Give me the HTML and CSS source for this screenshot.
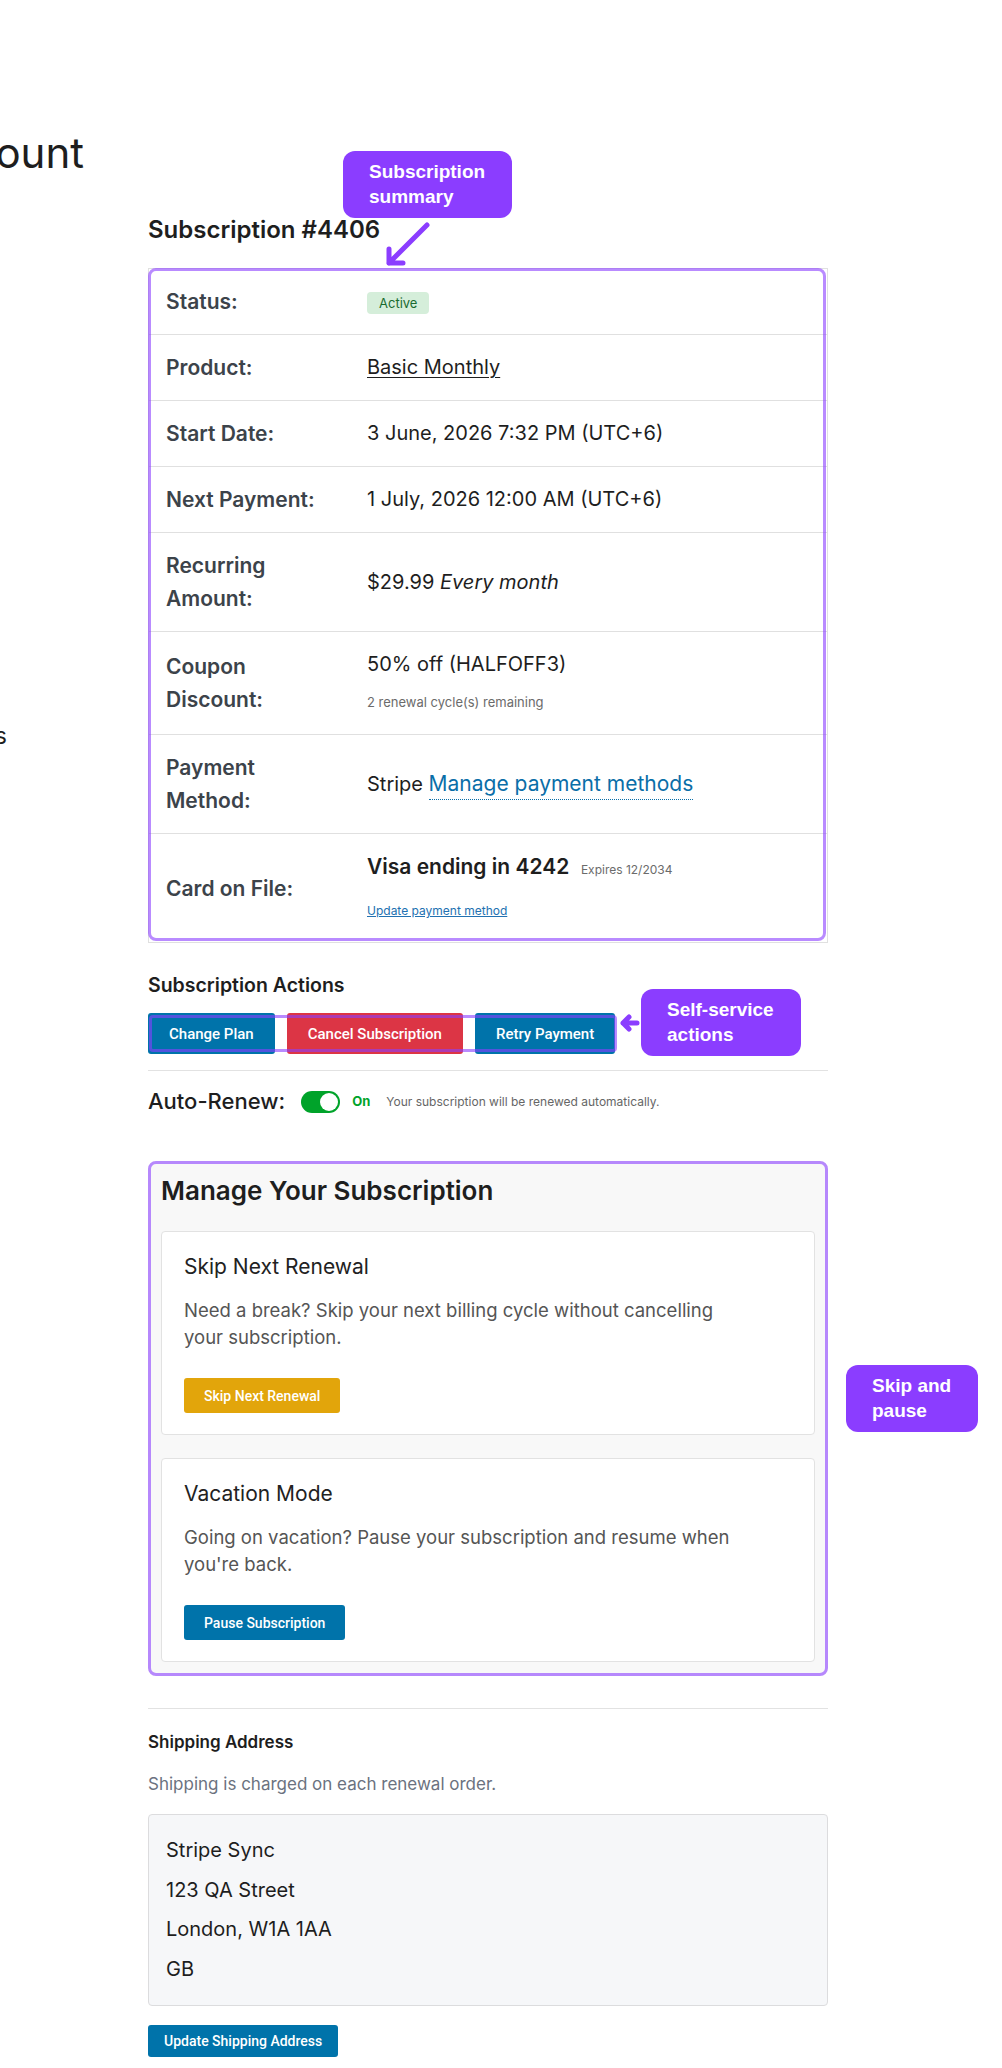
FILE: index.html
```html
<!DOCTYPE html>
<html lang="en">

<head>
	<meta charset="UTF-8">
	<meta name="viewport" content="width=device-width, initial-scale=1.0">
	<title>My Account - Subscription #4406</title>
	<link rel="stylesheet" href="styles.css">
</head>

<body>
	<div class="page">
		<h1 class="account-title"><span>My Account</span></h1>

		<div class="account-layout">
			<nav class="account-nav">
				<ul>
					<li><a href="#">Subscriptions</a></li>
				</ul>
			</nav>

			<main class="account-content">
				<h2 class="subscription-title">Subscription #4406</h2>

				<div class="summary">
					<table class="summary-table">
						<tr>
							<th>Status:</th>
							<td><span class="badge badge-active">Active</span></td>
						</tr>
						<tr>
							<th>Product:</th>
							<td><a class="product-link" href="#">Basic Monthly</a></td>
						</tr>
						<tr>
							<th>Start Date:</th>
							<td>3 June, 2026 7:32 PM (UTC+6)</td>
						</tr>
						<tr>
							<th>Next Payment:</th>
							<td>1 July, 2026 12:00 AM (UTC+6)</td>
						</tr>
						<tr>
							<th>Recurring Amount:</th>
							<td>$29.99 <em>Every month</em></td>
						</tr>
						<tr>
							<th>Coupon Discount:</th>
							<td>
								50% off (HALFOFF3)
								<small class="cell-note">2 renewal cycle(s) remaining</small>
							</td>
						</tr>
						<tr>
							<th>Payment Method:</th>
							<td>Stripe <a class="dotted-link" href="#">Manage payment methods</a></td>
						</tr>
						<tr>
							<th>Card on File:</th>
							<td>
								<strong class="card-name">Visa ending in 4242</strong>
								<span class="card-expiry">Expires 12/2034</span>
								<a class="small-link" href="#">Update payment method</a>
							</td>
						</tr>
					</table>
					<div class="highlight"></div>
				</div>

				<h3 class="section-title">Subscription Actions</h3>
				<div class="actions">
					<button class="btn btn-primary">Change Plan</button>
					<button class="btn btn-danger">Cancel Subscription</button>
					<button class="btn btn-primary">Retry Payment</button>
					<div class="highlight"></div>
				</div>

				<hr class="divider">

				<div class="auto-renew">
					<span class="auto-renew-label">Auto-Renew:</span>
					<span class="toggle"></span>
					<span class="toggle-state">On</span>
					<span class="toggle-hint">Your subscription will be renewed automatically.</span>
				</div>

				<section class="manage">
					<h2 class="manage-title">Manage Your Subscription</h2>

					<div class="option-card">
						<h3>Skip Next Renewal</h3>
						<p>Need a break? Skip your next billing cycle without cancelling your subscription.</p>
						<button class="btn btn-sm btn-warning">Skip Next Renewal</button>
					</div>

					<div class="option-card">
						<h3>Vacation Mode</h3>
						<p>Going on vacation? Pause your subscription and resume when you're back.</p>
						<button class="btn btn-sm btn-primary">Pause Subscription</button>
					</div>

					<div class="highlight"></div>
				</section>

				<hr class="divider divider-shipping">

				<section class="shipping">
					<h4>Shipping Address</h4>
					<p class="shipping-note">Shipping is charged on each renewal order.</p>
					<address class="address-box">
						Stripe Sync<br>
						123 QA Street<br>
						London, W1A 1AA<br>
						GB
					</address>
					<button class="btn btn-xs btn-primary">Update Shipping Address</button>
				</section>
			</main>
		</div>

		<!-- annotation callouts -->
		<div class="note note-summary">Subscription<br>summary</div>
		<svg class="note-arrow arrow-summary" width="50" height="50" viewBox="0 0 50 50">
			<path d="M44 4 L6 42 M6 42 L6 28 M6 42 L20 42" />
		</svg>

		<div class="note note-actions">Self-service<br>actions</div>
		<svg class="note-arrow arrow-actions" width="24" height="24" viewBox="0 0 24 24">
			<path d="M19 12 L5 12 M5 12 L11 6 M5 12 L11 18" />
		</svg>

		<div class="note note-skip">Skip and<br>pause</div>
	</div>
</body>

</html>
```

FILE: styles.css
```css
body {
	margin: 0;
	font-family: Inter, "Noto Sans", Arial, sans-serif;
	color: #1e1e1e;
	background-color: #fff;
}

.page {
	position: relative;
	padding-top: 128px;
	min-height: 2068px;
	box-sizing: border-box;
}

.account-title {
	width: 84px;
	display: flex;
	justify-content: flex-end;
	white-space: nowrap;
	margin: 0;
	font-size: 42px;
	font-weight: 400;
	line-height: 50px;
}

.account-layout {
	display: grid;
	grid-template-columns: 148px 680px;
}

.account-nav ul {
	list-style: none;
	margin: 0;
	padding: 542px 0 0;
	width: 7px;
	display: flex;
	flex-direction: column;
	align-items: flex-end;
}

.account-nav a {
	white-space: nowrap;
	font-size: 23px;
	line-height: 32px;
	color: #1e1e1e;
	text-decoration: none;
}

.account-content {
	padding-top: 37px;
}

.subscription-title {
	font-size: 24px;
	font-weight: 600;
	line-height: 30px;
	margin: 0 0 23px;
}

/* summary table */
.summary {
	position: relative;
}

.summary-table {
	width: 100%;
	border: 1px solid #e0e0e0;
	border-spacing: 0;
	font-size: 20px;
	line-height: 33px;
}

.summary-table th,
.summary-table td {
	vertical-align: middle;
	text-align: left;
}

.summary-table tr + tr th,
.summary-table tr + tr td {
	border-top: 1px solid #e0e0e0;
}

.summary-table th {
	width: 170px;
	padding: 16px 31px 16px 17px;
	font-size: 21px;
	font-weight: 600;
	color: #3c434a;
}

.summary-table td {
	padding: 16px 17px 16px 0;
	color: #1e1e1e;
}

.badge {
	display: inline-block;
	font-size: 13px;
	line-height: 22px;
	padding: 0 12px;
	border-radius: 4px;
	vertical-align: middle;
}

.badge-active {
	background-color: #d5eeda;
	color: #1a6b30;
}

.product-link {
	color: #1e1e1e;
	text-decoration: underline;
	text-underline-offset: 3px;
	text-decoration-thickness: 1px;
}

.cell-note {
	display: block;
	margin-top: 5px;
	font-size: 13px;
	line-height: 32px;
	color: #6b6b6b;
}

.dotted-link {
	font-size: 21px;
	color: #0a6ea8;
	text-decoration: none;
	border-bottom: 1px dotted #0a6ea8;
	padding-bottom: 3px;
}

.card-name {
	font-size: 21px;
	font-weight: 600;
}

.card-expiry {
	font-size: 12px;
	color: #6b6b6b;
	margin-left: 6px;
}

.small-link {
	display: block;
	margin-top: 10px;
	font-size: 12px;
	line-height: 30px;
	color: #2271b1;
	text-decoration: underline;
}

/* annotation frames drawn over the real content */
.highlight {
	position: absolute;
	border: 3px solid rgba(139, 61, 255, 0.6);
	border-radius: 8px;
	pointer-events: none;
}

.summary .highlight {
	top: 0;
	left: 0;
	right: 2px;
	bottom: 2px;
}

.section-title {
	font-size: 19.5px;
	font-weight: 600;
	line-height: 25px;
	margin: 30px 0 15px;
}

.actions {
	position: relative;
	display: flex;
	gap: 12px;
	width: max-content;
}

.actions .highlight {
	top: 2px;
	bottom: 2px;
	left: 1px;
	right: -2px;
	border-radius: 4px;
}

.btn {
	font-family: Roboto, "Liberation Sans", Arial, sans-serif;
	font-weight: 500;
	font-size: 15px;
	color: #fff;
	border: 0;
	border-radius: 3px;
	height: 41px;
	padding: 0 21px;
	cursor: pointer;
}

.btn-primary {
	background-color: #0073aa;
}

.btn-danger {
	background-color: #dc3545;
}

.btn-warning {
	background-color: #e2a50b;
}

.btn-sm {
	height: 35px;
	padding: 0 20px;
	font-size: 14px;
}

.btn-xs {
	height: 32px;
	padding: 0 16px;
	font-size: 14px;
}

.divider {
	border: 0;
	border-top: 1px solid #e2e2e2;
	margin: 16px 0 16px;
}

.auto-renew {
	display: flex;
	align-items: center;
	line-height: 29px;
}

.auto-renew-label {
	font-size: 22px;
	font-weight: 500;
	margin-right: 16px;
}

.toggle {
	position: relative;
	width: 39px;
	height: 22px;
	border-radius: 11px;
	background-color: #00a32a;
}

.toggle::after {
	content: "";
	position: absolute;
	top: 2px;
	right: 2px;
	width: 18px;
	height: 18px;
	border-radius: 50%;
	background-color: #fff;
}

.toggle-state {
	margin-left: 12px;
	font-size: 13px;
	font-weight: 700;
	color: #00a32a;
}

.toggle-hint {
	margin-left: 16px;
	font-size: 12px;
	color: #666;
}

/* manage box */
.manage {
	position: relative;
	margin-top: 45px;
	padding: 14px 13px 14px;
	background-color: #f8f8f8;
	border-radius: 8px;
}

.manage .highlight {
	top: 0;
	left: 0;
	right: 0;
	bottom: 0;
}

.manage-title {
	font-size: 26px;
	font-weight: 600;
	line-height: 32px;
	margin: 0 0 24px;
}

.option-card {
	background-color: #fff;
	border: 1px solid #e2e2e2;
	border-radius: 4px;
	padding: 20px 22px 21px;
}

.option-card + .option-card {
	margin-top: 23px;
}

.option-card h3 {
	font-size: 21px;
	font-weight: 400;
	line-height: 29px;
	margin: 0 0 16px;
	color: #222;
}

.option-card p {
	max-width: 560px;
	font-size: 18.5px;
	line-height: 27px;
	color: #555;
	margin: 0 0 27px;
}

/* shipping */
.divider-shipping {
	margin: 32px 0 21px;
}

.shipping h4 {
	font-size: 17px;
	font-weight: 600;
	line-height: 24px;
	margin: 0 0 17px;
}

.shipping-note {
	font-size: 17px;
	line-height: 26px;
	color: #6b7280;
	margin: 0 0 17px;
}

.address-box {
	font-style: normal;
	font-size: 20px;
	line-height: 39.5px;
	padding: 16px 17px;
	background-color: #f6f7f9;
	border: 1px solid #dcdcde;
	border-radius: 4px;
	margin-bottom: 19px;
}

/* callouts */
.note {
	position: absolute;
	background-color: #8b3dff;
	color: #fff;
	font-family: "Liberation Sans", Arial, sans-serif;
	font-weight: 700;
	font-size: 19px;
	line-height: 1.3;
	padding: 9px 27px 9px 26px;
	border-radius: 12px;
}

.note-summary {
	left: 343px;
	top: 151px;
}

.note-actions {
	left: 641px;
	top: 989px;
}

.note-skip {
	left: 846px;
	top: 1365px;
}

.note-arrow {
	position: absolute;
	fill: none;
	stroke: #8b3dff;
	stroke-width: 5;
	stroke-linecap: round;
	stroke-linejoin: round;
}

.arrow-summary {
	left: 383px;
	top: 221px;
}

.arrow-actions {
	left: 618px;
	top: 1011px;
}
```
